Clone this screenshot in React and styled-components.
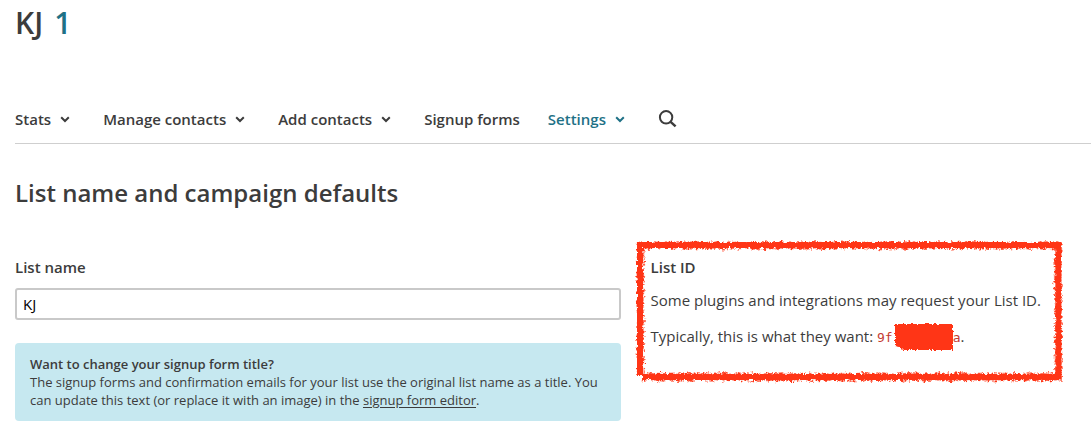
import React from "react";
import styled, { createGlobalStyle } from "styled-components";

const Global = createGlobalStyle`
  *, *::before, *::after { box-sizing: border-box; }
  body {
    margin: 0;
    background: #fff;
    color: #3c3c3c;
    font-family: "Open Sans", "Noto Sans", sans-serif;
    font-size: 15px;
    line-height: 24px;
  }
`;

const Page = styled.main`
  padding: 2px 0 24px 15px;
`;

const Title = styled.h1`
  display: flex;
  gap: 11px;
  margin: 0;
  font-size: 30px;
  line-height: 42px;
  font-weight: 600;
`;

const CountLink = styled.a`
  color: #1f7186;
  text-decoration: none;
`;

const Nav = styled.nav`
  display: flex;
  align-items: center;
  gap: 28px;
  margin-top: 63px;
  padding-bottom: 12px;
  border-bottom: 1px solid #cfcfcf;
`;

const NavButton = styled.button`
  display: flex;
  align-items: center;
  gap: 7px;
  padding: 0 3px 0 0;
  border: 0;
  background: none;
  font: inherit;
  font-weight: 600;
  white-space: nowrap;
  color: ${(p) => (p.$active ? "#1f7186" : "inherit")};
  cursor: pointer;
`;

const NavLink = styled.a`
  font-weight: 600;
  white-space: nowrap;
  color: inherit;
  text-decoration: none;
`;

const Heading = styled.h2`
  margin: 32px 0 0;
  font-size: 24px;
  line-height: 34px;
  font-weight: 600;
`;

const Columns = styled.div`
  display: grid;
  grid-template-columns: 11fr 8fr;
  gap: 30px;
  align-items: start;
  margin-top: 45px;
`;

const Label = styled.label`
  display: block;
  font-weight: 600;
`;

const TextInput = styled.input`
  display: block;
  width: 100%;
  height: 32px;
  margin: 9px 0 23px;
  padding: 0 6px;
  border: 2px solid #c9c9c9;
  border-radius: 3px;
  background: #fff;
  color: #000;
  font: inherit;
`;

const Notice = styled.aside`
  padding: 12px 15px;
  border-radius: 4px;
  background: #c6e8f0;
  font-size: 13px;
  line-height: 18px;
`;

const NoticeTitle = styled.strong`
  display: block;
  font-weight: 600;
`;

const NoticeText = styled.p`
  margin: 0;
`;

const TextLink = styled.a`
  color: inherit;
  text-underline-offset: 2px;
`;

const IdPanel = styled.section`
  position: relative;
`;

const PanelTitle = styled.h3`
  margin: 0;
  font-size: 15px;
  line-height: 24px;
  font-weight: 600;
`;

const PanelText = styled.p`
  margin: ${(p) => (p.$first ? "9px" : "12px")} 0 0;
`;

const ListId = styled.code`
  display: inline-flex;
  font-family: "DejaVu Sans Mono", monospace;
  font-size: 13px;
  color: #c43b32;
`;

const Redaction = styled.span`
  position: relative;
  width: 60px;
`;

const RedactionMark = styled.svg`
  position: absolute;
  left: 1px;
  top: -4px;
  width: 62px;
  height: 32px;
`;

const Outline = styled.svg`
  position: absolute;
  left: -17px;
  top: -17px;
  width: calc(100% - 10px);
  height: 146px;
  pointer-events: none;
`;

function Chevron() {
  return (
    <svg width="14" height="14" viewBox="0 0 14 14" fill="none" aria-hidden="true">
      <path d="M3.2 5.3 L7 9 L10.8 5.3" stroke="currentColor" strokeWidth="2" />
    </svg>
  );
}

function SearchIcon() {
  return (
    <svg width="20" height="20" viewBox="0 0 20 20" fill="none" aria-hidden="true">
      <circle cx="8.1" cy="8.3" r="6.2" stroke="currentColor" strokeWidth="2" />
      <path d="M12.6 12.8 L17.6 17.4" stroke="currentColor" strokeWidth="2.4" />
    </svg>
  );
}

// Deterministic noise so that the crayon grain is the same on each render.
function createNoise(seed) {
  let s = seed;
  return () => {
    s = (s * 1664525 + 1013904223) % 4294967296;
    return s / 4294967296;
  };
}

// Tiny squares scattered over a band, which fray the rims of the stroke.
function grain(seed, x, y, w, h, density) {
  const rnd = createNoise(seed);
  const count = Math.round(Math.max(w, h) * density);
  let d = "";
  for (let i = 0; i < count; i += 1) {
    const size = (0.6 + rnd() * 0.9).toFixed(1);
    const px = (x + rnd() * w).toFixed(1);
    const py = (y + rnd() * h).toFixed(1);
    d += `M${px} ${py}h${size}v${size}h-${size}z`;
  }
  return d;
}

function CrayonOutline() {
  return (
    <Outline viewBox="0 0 430 146" preserveAspectRatio="none" aria-hidden="true">
      <defs>
        <filter id="crayon" x="-2%" y="-5%" width="104%" height="110%">
          <feTurbulence type="fractalNoise" baseFrequency="0.3" numOctaves="3" seed="4" />
          <feDisplacementMap in="SourceGraphic" scale="4" xChannelSelector="R" yChannelSelector="G" />
        </filter>
      </defs>
      <g filter="url(#crayon)">
        <path
          fill="#ff3617"
          d="M3 4H427V10H3zM8 136H427V142H8zM3 5H9V138H3zM421 5H427V142H421z"
        />
        <path fill="#ff3617" d={grain(3, 3, 3, 423, 8, 4)} />
        <path fill="#ff3617" d={grain(7, 7, 134, 419, 9, 4)} />
        <path fill="#ff3617" d={grain(11, 2, 4, 8, 133, 4)} />
        <path fill="#ff3617" d={grain(19, 419, 4, 8, 138, 4)} />
      </g>
    </Outline>
  );
}

function CrayonBlock() {
  return (
    <RedactionMark viewBox="0 0 62 32" aria-hidden="true">
      <defs>
        <filter id="scribble" x="-5%" y="-10%" width="110%" height="120%">
          <feTurbulence type="fractalNoise" baseFrequency="0.35" numOctaves="2" seed="9" />
          <feDisplacementMap in="SourceGraphic" scale="4" xChannelSelector="R" yChannelSelector="G" />
        </filter>
      </defs>
      <path
        d="M1 2H59L59 28H9L6 25L1 24z"
        fill="#ff3617"
        filter="url(#scribble)"
      />
    </RedactionMark>
  );
}

export default function App() {
  return (
    <>
      <Global />
      <Page>
        <Title>
          KJ <CountLink href="#contacts">1</CountLink>
        </Title>
        <Nav aria-label="List">
          <NavButton type="button">Stats <Chevron /></NavButton>
          <NavButton type="button">Manage contacts <Chevron /></NavButton>
          <NavButton type="button">Add contacts <Chevron /></NavButton>
          <NavLink href="#forms">Signup forms</NavLink>
          <NavButton type="button" $active>Settings <Chevron /></NavButton>
          <NavButton type="button" aria-label="Search"><SearchIcon /></NavButton>
        </Nav>
        <Heading>List name and campaign defaults</Heading>
        <Columns>
          <div>
            <Label htmlFor="list-name">List name</Label>
            <TextInput id="list-name" type="text" defaultValue="KJ" />
            <Notice>
              <NoticeTitle>Want to change your signup form title?</NoticeTitle>
              <NoticeText>
                The signup forms and confirmation emails for your list use the original list
                name as a title. You can update this text (or replace it with an image) in
                the <TextLink href="#editor">signup form editor</TextLink>.
              </NoticeText>
            </Notice>
          </div>
          <IdPanel>
            <PanelTitle>List ID</PanelTitle>
            <PanelText $first>Some plugins and integrations may request your List ID.</PanelText>
            <PanelText>
              Typically, this is what they want:{" "}
              <ListId>
                9f
                <Redaction><CrayonBlock /></Redaction>
                a
              </ListId>.
            </PanelText>
            <CrayonOutline />
          </IdPanel>
        </Columns>
      </Page>
    </>
  );
}
